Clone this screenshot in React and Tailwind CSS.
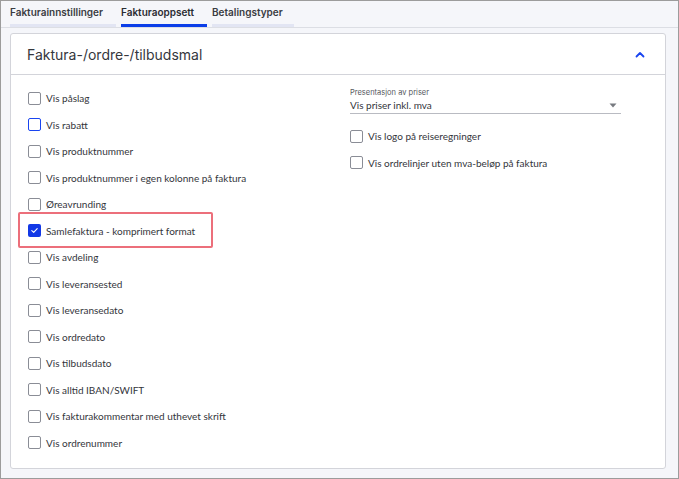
import React from "react";

const left = [
  "Vis påslag",
  "Vis rabatt",
  "Vis produktnummer",
  "Vis produktnummer i egen kolonne på faktura",
  "Øreavrunding",
  "Samlefaktura - komprimert format",
  "Vis avdeling",
  "Vis leveransested",
  "Vis leveransedato",
  "Vis ordredato",
  "Vis tilbudsdato",
  "Vis alltid IBAN/SWIFT",
  "Vis fakturakommentar med uthevet skrift",
  "Vis ordrenummer",
];

function Box({ checked, focus }) {
  if (checked) {
    return (
      <span className="flex h-[13px] w-[13px] shrink-0 items-center justify-center rounded-[2px] bg-[#1238e6]">
        <svg width="9" height="9" viewBox="0 0 9 9" fill="none">
          <path d="M1.8 4.7 L3.7 6.4 L7.2 2.6" stroke="white" strokeWidth="1.1" strokeLinecap="round" strokeLinejoin="round" />
        </svg>
      </span>
    );
  }
  return (
    <span
      className={
        "h-[13px] w-[13px] shrink-0 rounded-[2px] border bg-white " +
        (focus ? "border-[#1a45f0] border-[1.5px]" : "border-[#8a8d96]")
      }
    />
  );
}

function Row({ label, checked, focus, highlight }) {
  return (
    <div className="relative flex h-[26.5px] items-center gap-[5px]">
      {highlight && (
        <span className="pointer-events-none absolute left-[-10px] top-[-6px] h-[36px] w-[195px] rounded-[2px] border-2 border-[#ec6f7b]" />
      )}
      <Box checked={checked} focus={focus} />
      <span
        className="text-[10px] leading-none text-[#33353b]"
        style={{ fontFamily: "Lato, 'Noto Sans', sans-serif" }}
      >
        {label}
      </span>
    </div>
  );
}

export default function App() {
  return (
    <div
      className="box-border flex h-[479px] w-[679px] flex-col border border-[#9c9c9c] bg-[#f5f6fa]"
      style={{ fontFamily: "Inter, 'Noto Sans', sans-serif" }}
    >
      <div className="flex h-[27px] items-end gap-[5px] border-b border-[#dcdee4] px-[9px]">
        <div className="flex h-full w-[106px] flex-col justify-end">
          <div className="flex flex-1 items-center text-[10px] font-semibold text-[#3a3c42]">Fakturainnstillinger</div>
          <div className="h-[3px] bg-[#e2e5f3]" />
        </div>
        <div className="flex h-full w-[86px] flex-col justify-end">
          <div className="flex flex-1 items-center text-[10px] font-semibold text-[#2a2c32]">Fakturaoppsett</div>
          <div className="h-[3px] bg-[#0b3ee8]" />
        </div>
        <div className="flex h-full w-[82px] flex-col justify-end">
          <div className="flex flex-1 items-center text-[10px] font-semibold text-[#3a3c42]">Betalingstyper</div>
          <div className="h-[3px] bg-[#e2e5f3]" />
        </div>
      </div>

      <div className="ml-[9px] mt-[5px] flex h-[436px] w-[656px] flex-col rounded-[3px] border border-[#d3d4da] bg-white">
        <div className="flex h-[41px] shrink-0 items-center justify-between border-b border-[#d3d4da] pl-[16px] pr-[20px]">
          <span className="text-[14px] text-[#35373d]">Faktura-/ordre-/tilbudsmal</span>
          <svg width="10" height="7" viewBox="0 0 10 7" fill="none">
            <path d="M1.5 5.5 L5 2 L8.5 5.5" stroke="#1a45f0" strokeWidth="1.8" strokeLinecap="round" strokeLinejoin="round" />
          </svg>
        </div>
        <div className="flex pl-[17px] pt-[10px]">
          <div className="flex w-[322px] flex-col">
            {left.map((l, i) => (
              <Row key={l} label={l} focus={i === 1} checked={i === 5} highlight={i === 5} />
            ))}
          </div>
          <div className="flex w-[271px] flex-col pt-[2px]">
            <div className="pt-[1px] text-[7.5px] leading-[10px] text-[#55575d]">Presentasjon av priser</div>
            <div className="flex h-[16px] items-center justify-between border-b border-[#b9bbc2] pr-[4px]">
              <span
                className="text-[10px] text-[#33353b]"
                style={{ fontFamily: "Lato, 'Noto Sans', sans-serif" }}
              >
                Vis priser inkl. mva
              </span>
              <svg width="8" height="5" viewBox="0 0 8 5">
                <path d="M0.5 0.5 H7.5 L4 4.5 Z" fill="#777a80" />
              </svg>
            </div>
            <div className="mt-[9px] flex flex-col">
              <Row label="Vis logo på reiseregninger" />
              <Row label="Vis ordrelinjer uten mva-beløp på faktura" />
            </div>
          </div>
        </div>
      </div>
    </div>
  );
}
